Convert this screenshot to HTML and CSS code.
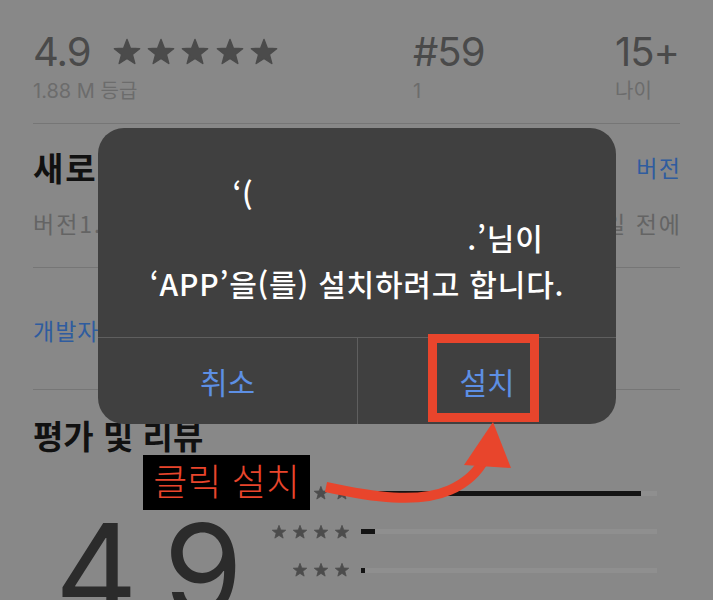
FILE: index.html
```html
<!DOCTYPE html>
<html lang="ko">
<head>
<meta charset="utf-8">
<title>설치</title>
<link rel="stylesheet" href="styles.css">
</head>
<body>
<svg class="defs" width="0" height="0" aria-hidden="true">
  <defs>
    <symbol id="star" viewBox="0 0 24 24">
      <polygon points="12,2 14.65,8.96 22.08,9.32 16.28,13.99 18.23,21.18 12,17.1 5.77,21.18 7.72,13.99 1.92,9.32 9.35,8.96" stroke-linejoin="round" stroke-width="1.2" stroke="currentColor" fill="currentColor"/>
    </symbol>
  </defs>
</svg>
<div class="page">
  <section class="stats">
    <div class="stat">
      <div class="stat-main">
        <span class="big">4.9</span>
        <span class="stars-lg">
          <svg><use href="#star"/></svg><svg><use href="#star"/></svg><svg><use href="#star"/></svg><svg><use href="#star"/></svg><svg><use href="#star"/></svg>
        </span>
      </div>
      <div class="sub">1.88 M 등급</div>
    </div>
    <div class="stat">
      <div class="stat-main"><span class="big">#59</span></div>
      <div class="sub">1</div>
    </div>
    <div class="stat">
      <div class="stat-main"><span class="big">15+</span></div>
      <div class="sub">나이</div>
    </div>
  </section>

  <section class="news">
    <div class="row">
      <h2 class="title">새로운 기능</h2>
      <span class="link">버전</span>
    </div>
    <div class="row meta">
      <span>버전1.0.0</span>
      <span>1일 전에</span>
    </div>
  </section>

  <section class="dev">
    <span class="link">개발자</span>
  </section>

  <section class="reviews">
    <h2 class="title">평가 및 리뷰</h2>
    <div class="ratings">
      <div class="score">4.9</div>
      <div class="bars">
        <div class="bar-row">
          <span class="stars-sm"><svg><use href="#star"/></svg><svg><use href="#star"/></svg><svg><use href="#star"/></svg><svg><use href="#star"/></svg><svg><use href="#star"/></svg></span>
          <span class="track"><span class="fill" style="width:94.6%"></span></span>
        </div>
        <div class="bar-row">
          <span class="stars-sm"><svg><use href="#star"/></svg><svg><use href="#star"/></svg><svg><use href="#star"/></svg><svg><use href="#star"/></svg></span>
          <span class="track"><span class="fill" style="width:4.8%"></span></span>
        </div>
        <div class="bar-row">
          <span class="stars-sm"><svg><use href="#star"/></svg><svg><use href="#star"/></svg><svg><use href="#star"/></svg></span>
          <span class="track"><span class="fill" style="width:1.2%"></span></span>
        </div>
      </div>
    </div>
  </section>

  <div class="alert">
    <div class="alert-msg">
      <div class="line">‘(<span class="redact r1"></span></div>
      <div class="line"><span class="redact r2"></span>.’님이</div>
      <div class="line">‘APP’을(를) 설치하려고 합니다.</div>
    </div>
    <div class="alert-btns">
      <button class="btn">취소</button>
      <button class="btn">설치</button>
    </div>
  </div>

  <div class="highlight"></div>
  <div class="label">클릭 설치</div>
  <svg class="arrow" width="713" height="600" viewBox="0 0 713 600">
    <path d="M326 487 C 372 497 418 504 450 490 C 468 482 479 470 485 458" fill="none" stroke="#e8452c" stroke-width="10"/>
    <polygon points="493,422 464,465 511,468" fill="#e8452c"/>
  </svg>
</div>
</body>
</html>
```

FILE: styles.css
```css
* { box-sizing: border-box; }
html, body { margin: 0; padding: 0; }
body {
  background: #888888;
  font-family: "Inter", "Noto Sans CJK KR", sans-serif;
  width: 713px;
  height: 600px;
  overflow: hidden;
}
.defs { position: absolute; }
.page { position: relative; width: 713px; height: 600px; overflow: hidden; }

.stats {
  margin: 0 33px;
  display: grid;
  grid-template-columns: 380px 202px 1fr;
  padding-top: 32px;
  height: 124px;
  border-bottom: 1px solid #767676;
}
.stat-main { display: flex; align-items: center; height: 40px; }
.big {
  font-size: 40px;
  line-height: 40px;
  color: #4a4a4a;
  letter-spacing: -1px;
}
.stars-lg { display: flex; gap: 4.4px; margin-left: 21px; color: #4b4b4b; }
.stars-lg svg { width: 30px; height: 30px; }
.sub {
  margin-top: 7px;
  font-size: 20px;
  line-height: 24px;
  color: #6c6c6c;
}

.news {
  margin: 0 33px;
  padding-top: 24px;
  height: 144px;
  border-bottom: 1px solid #767676;
}
.row { display: flex; justify-content: space-between; align-items: center; }
.title {
  margin: 0;
  font-family: "Noto Sans CJK KR", sans-serif;
  font-weight: 700;
  font-size: 33px;
  line-height: 38px;
  color: #111;
}
.news .title { letter-spacing: 2px; }
.link {
  font-family: "Noto Sans CJK KR", sans-serif;
  font-size: 23px;
  line-height: 30px;
  letter-spacing: 1px;
  color: #2f5c9f;
}
.news .link { letter-spacing: 1.5px; margin-right: -1.5px; }
.meta {
  margin-top: 22px;
  font-family: "Noto Sans CJK KR", sans-serif;
  font-size: 23px;
  line-height: 30px;
  letter-spacing: 2px;
  color: #646464;
}
.meta span:last-child { margin-right: -2px; }

.dev {
  margin: 0 33px;
  padding-top: 47px;
  height: 122px;
  border-bottom: 1px solid #767676;
}

.reviews { margin: 0 33px; padding-top: 26px; }
.reviews .title { line-height: 38px; }
.ratings { display: flex; }
.score {
  width: 218px;
  padding-left: 22px;
  margin-top: 52px;
  font-size: 128px;
  line-height: 128px;
  color: #2b2b2b;
  letter-spacing: -3px;
  white-space: nowrap;
}
.bars { margin-top: 20px; display: flex; flex-direction: column; }
.bar-row { display: flex; align-items: center; height: 38.5px; gap: 11px; }
.stars-sm { width: 99px; display: flex; justify-content: flex-end; gap: 5px; color: #4c4c4c; }
.stars-sm svg { width: 16px; height: 16px; }
.track { display: block; width: 296px; height: 5px; background: #8f8f8f; }
.fill { display: block; height: 5px; background: #141414; }

.alert {
  position: absolute;
  left: 98px;
  top: 128px;
  width: 518px;
  height: 296px;
  border-radius: 26px;
  background: #404040;
  display: flex;
  flex-direction: column;
  overflow: hidden;
}
.alert-msg {
  height: 210px;
  padding-top: 40px;
  border-bottom: 1px solid #5f5f5f;
  color: #fff;
  font-family: "Noto Sans CJK KR", sans-serif;
  font-weight: 500;
  font-size: 30px;
  letter-spacing: 0.8px;
  text-align: center;
}
.line { line-height: 46px; height: 46px; white-space: nowrap; }
.redact { display: inline-block; height: 10px; }
.r1 { width: 228px; }
.r2 { width: 297px; }
.alert-btns { flex: 1; display: grid; grid-template-columns: 259px 1fr; }
.btn {
  border: 0;
  background: transparent;
  color: #5d8fe4;
  font-family: "Noto Sans CJK KR", sans-serif;
  font-size: 30px;
  padding: 0;
}
.btn + .btn { border-left: 1px solid #5f5f5f; }

.highlight {
  position: absolute;
  left: 428px;
  top: 334px;
  width: 111px;
  height: 88px;
  border: 9px solid #e8452c;
}
.label {
  position: absolute;
  left: 143px;
  top: 455px;
  width: 167px;
  height: 55px;
  background: #000;
  color: #e8452c;
  font-family: "Noto Sans CJK KR", sans-serif;
  font-weight: 300;
  font-size: 37px;
  line-height: 50px;
  text-align: center;
  white-space: nowrap;
}
.arrow { position: absolute; left: 0; top: 0; pointer-events: none; }
```
